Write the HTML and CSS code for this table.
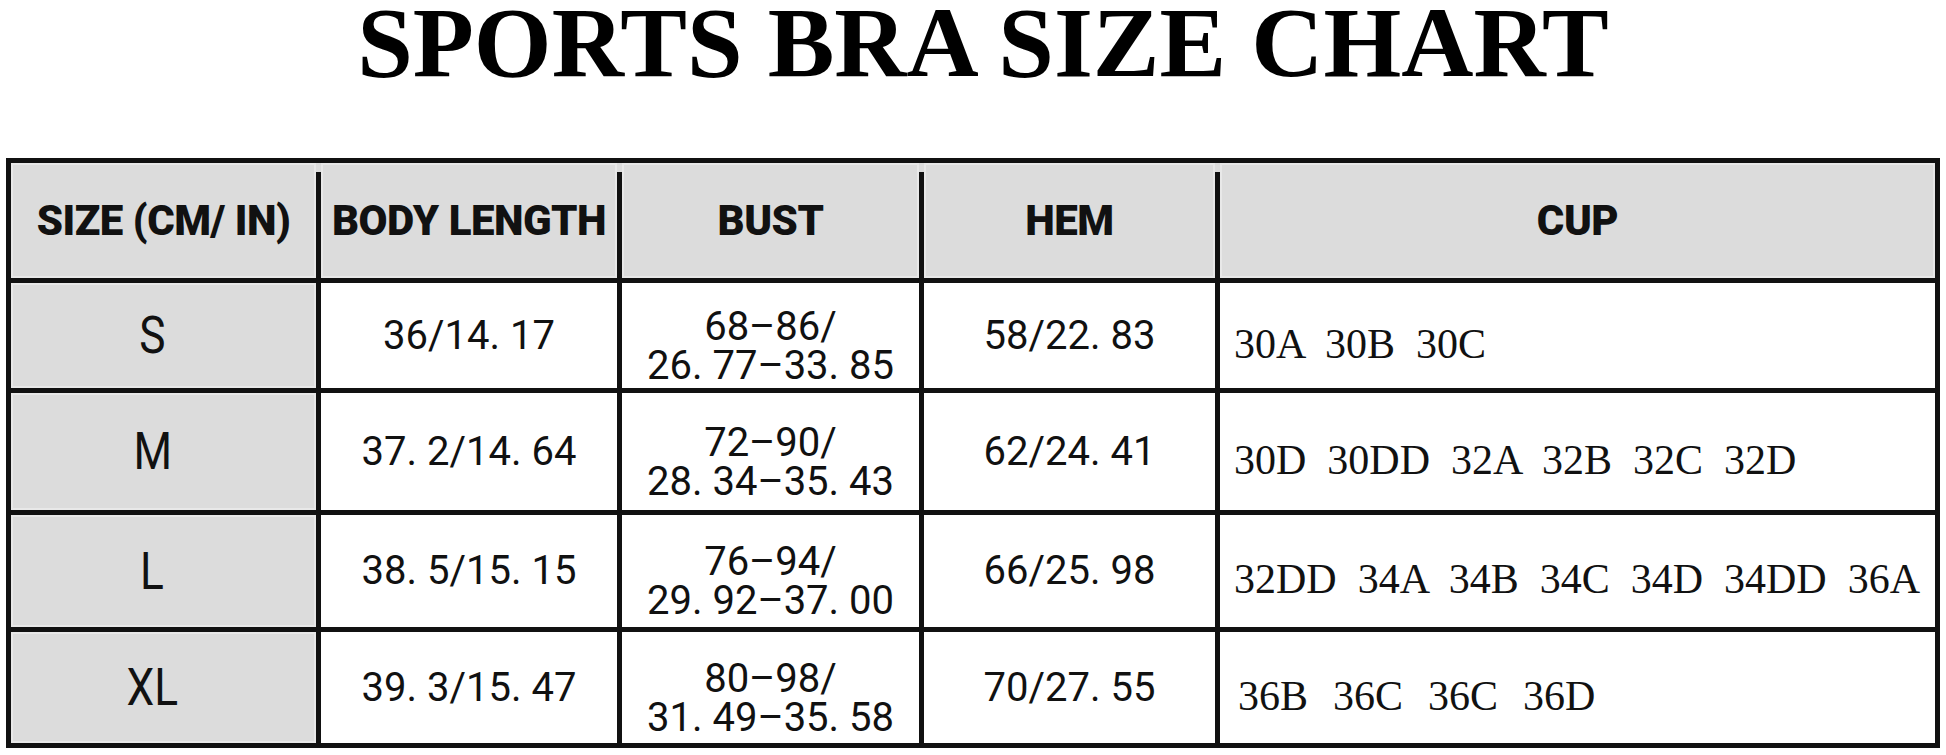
FILE: index.html
```html
<!DOCTYPE html>
<html>
<head>
<meta charset="utf-8">
<link rel="stylesheet" href="styles.css">
</head>
<body>
<h1 class="title">SPORTS BRA SIZE CHART</h1>
<div class="chart">
  <div class="cell head">SIZE (CM/ IN)</div>
  <div class="cell head">BODY LENGTH</div>
  <div class="cell head">BUST</div>
  <div class="cell head">HEM</div>
  <div class="cell head">CUP</div>

  <div class="cell size"><span>S</span></div>
  <div class="cell num">36/14. 17</div>
  <div class="cell num two"><span class="ln">68–86/</span><span class="ln">26. 77–33. 85</span></div>
  <div class="cell num">58/22. 83</div>
  <div class="cell cup">30A  30B  30C</div>

  <div class="cell size"><span>M</span></div>
  <div class="cell num">37. 2/14. 64</div>
  <div class="cell num two"><span class="ln">72–90/</span><span class="ln">28. 34–35. 43</span></div>
  <div class="cell num">62/24. 41</div>
  <div class="cell cup">30D  30DD  32A  32B  32C  32D</div>

  <div class="cell size"><span>L</span></div>
  <div class="cell num">38. 5/15. 15</div>
  <div class="cell num two"><span class="ln">76–94/</span><span class="ln">29. 92–37. 00</span></div>
  <div class="cell num">66/25. 98</div>
  <div class="cell cup">32DD  34A  34B  34C  34D  34DD  36A</div>

  <div class="cell size"><span>XL</span></div>
  <div class="cell num">39. 3/15. 47</div>
  <div class="cell num two"><span class="ln">80–98/</span><span class="ln">31. 49–35. 58</span></div>
  <div class="cell num">70/27. 55</div>
  <div class="cell cup cup-wide">36B  36C  36C  36D</div>
</div>
</body>
</html>
```
FILE: styles.css
```css
html, body {
  margin: 0;
  padding: 0;
  background: #ffffff;
}

.title {
  margin: 0;
  font-family: "Liberation Serif", "Times New Roman", serif;
  font-weight: 700;
  font-size: 100px;
  line-height: 86px;
  text-align: center;
  color: #000;
  padding-left: 20px;
}

.chart {
  margin: 72px 0 0 6px;
  width: 1934px;
  box-sizing: border-box;
  display: grid;
  grid-template-columns: 305px 296px 297px 291px 715px;
  grid-template-rows: 115px 105px 117px 112px 111px;
  gap: 5px;
  padding: 5px;
  background:
    linear-gradient(#111, #111) left top / 5px 100% no-repeat,
    linear-gradient(#111, #111) right top / 5px 100% no-repeat,
    linear-gradient(to bottom, #111 0 5px, #dcdcdc 5px 14px, #111 14px);
}

.cell {
  background: #fff;
  display: flex;
  align-items: center;
  justify-content: center;
  text-align: center;
  color: #111;
}

.head {
  background: #dcdcdc;
  box-shadow: inset 0 0 0 2px #e8e8e8;
  font-family: Roboto, "Liberation Sans", sans-serif;
  font-weight: 900;
  font-size: 42px;
  letter-spacing: -0.5px;
}

.size {
  background: #dcdcdc;
  box-shadow: inset 0 0 0 2px #e8e8e8;
  padding-right: 22px;
  font-family: Roboto, "Liberation Sans", sans-serif;
  font-weight: 400;
  font-size: 52px;
}

.size span {
  display: inline-block;
  transform: scaleX(0.85);
}

.num {
  font-family: Roboto, "Liberation Sans", sans-serif;
  font-weight: 400;
  font-size: 40px;
  line-height: 38px;
}

.two {
  flex-direction: column;
  padding-top: 20px;
}

.two .ln {
  display: block;
  line-height: 31px;
  padding: 4px 0;
}

.cup {
  justify-content: flex-start;
  padding: 16px 0 0 14px;
  font-family: "Liberation Serif", "Times New Roman", serif;
  font-size: 42px;
  white-space: pre;
}

.cup-wide {
  padding-left: 18px;
  word-spacing: 2px;
}
```
